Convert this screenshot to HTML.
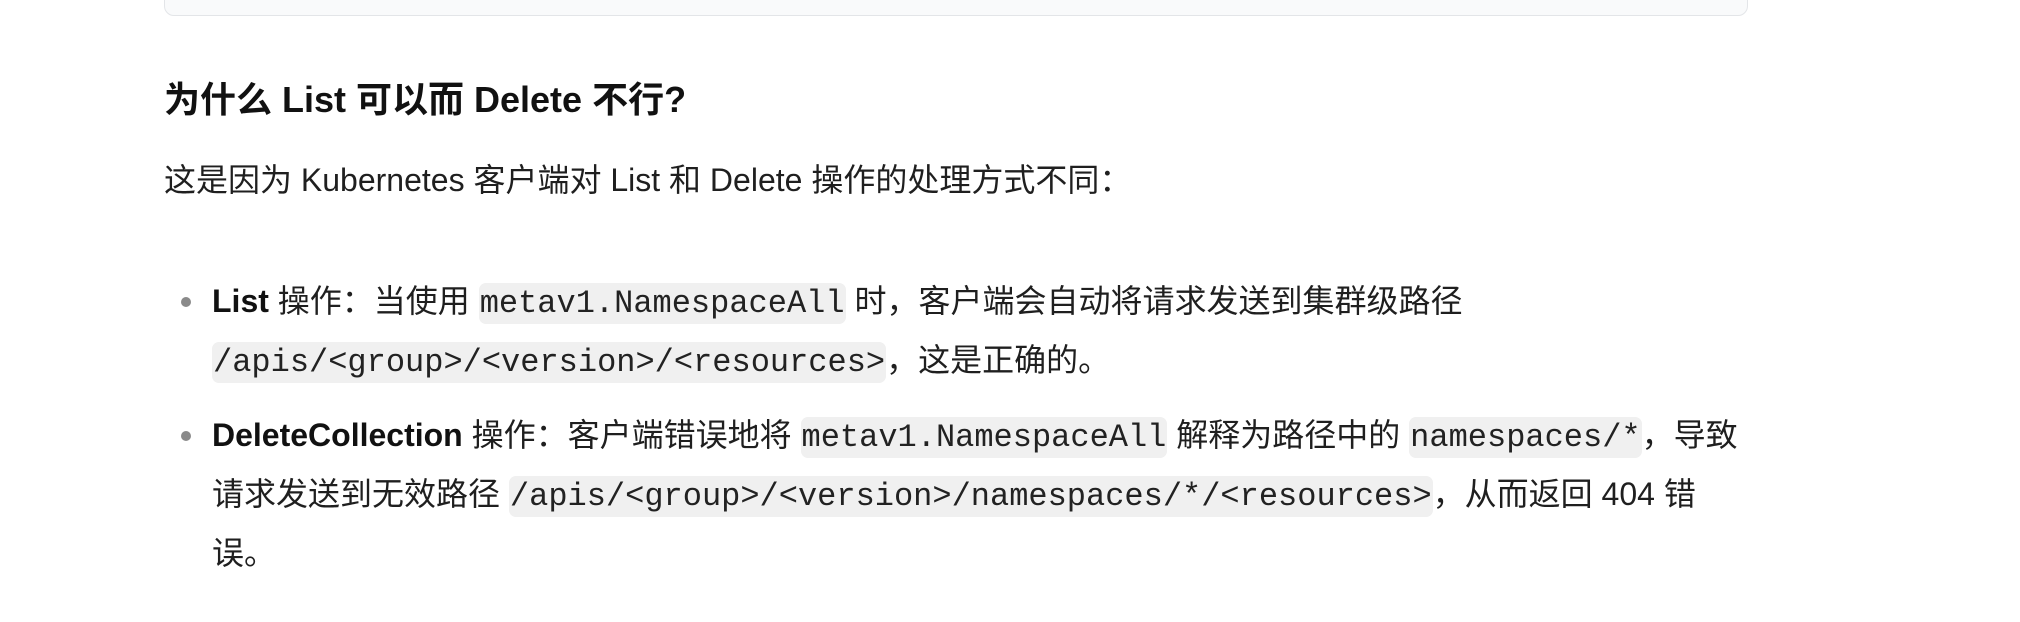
<!DOCTYPE html>
<html><head><meta charset="utf-8"><style>
html,body{margin:0;padding:0;background:#fff;}
body{width:2020px;height:622px;overflow:hidden;position:relative;font-family:"Liberation Sans","Noto Sans CJK SC",sans-serif;color:#1f1f1f;font-size:32px;}
.box{position:absolute;left:164px;top:-20px;width:1582px;height:34px;background:#f9fafb;border:1.5px solid #e3e5e8;border-radius:10px;}
h2{position:absolute;left:164px;top:76px;margin:0;font-size:36px;line-height:48px;font-weight:700;color:#111;}
p{position:absolute;left:164px;top:156px;margin:0;line-height:48px;}
ul{position:absolute;left:164px;top:272px;margin:0;padding:0 0 0 48px;list-style:none;width:1600px;}
li{position:relative;line-height:59px;}
li+li{margin-top:16px;}
li:before{content:"";position:absolute;left:-31px;top:25px;width:10px;height:10px;border-radius:50%;background:#8a8a8a;}
code{font-family:"Liberation Mono",monospace;font-size:32px;line-height:1;background:#f0f0f0;border-radius:7px;padding:2px 1px;color:#222;}
b{color:#111;}
</style></head><body>
<div class="box"></div>
<h2>为什么 List 可以而 Delete 不行?</h2>
<p>这是因为 Kubernetes 客户端对 List 和 Delete 操作的处理方式不同：</p>
<ul>
<li><b>List</b> 操作：当使用 <code>metav1.NamespaceAll</code> 时，客户端会自动将请求发送到集群级路径<br><code>/apis/&lt;group&gt;/&lt;version&gt;/&lt;resources&gt;</code>，这是正确的。</li>
<li><b>DeleteCollection</b> 操作：客户端错误地将 <code>metav1.NamespaceAll</code> 解释为路径中的 <code>namespaces/*</code>，导致<br>请求发送到无效路径 <code>/apis/&lt;group&gt;/&lt;version&gt;/namespaces/*/&lt;resources&gt;</code>，从而返回 404 错<br>误。</li>
</ul>
</body></html>
